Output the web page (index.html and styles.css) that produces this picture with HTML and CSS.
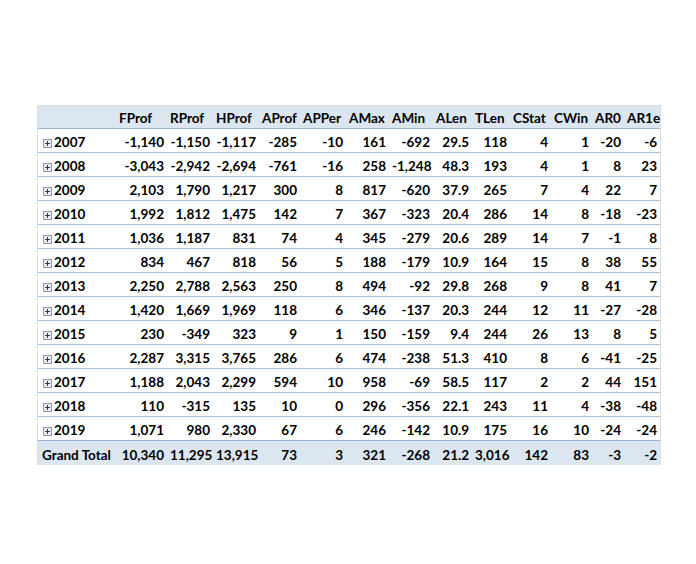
FILE: index.html
```html
<!DOCTYPE html>
<html>
<head>
<meta charset="utf-8">
<link rel="stylesheet" href="styles.css">
</head>
<body>
<div class="page">
<table class="pivot">
<colgroup>
<col class="c-label"><col class="c-fprof"><col class="c-rprof"><col class="c-hprof"><col class="c-aprof"><col class="c-apper"><col class="c-amax"><col class="c-amin"><col class="c-alen"><col class="c-tlen"><col class="c-cstat"><col class="c-cwin"><col class="c-ar0"><col class="c-ar1e">
</colgroup>
<thead>
<tr><th></th><th>FProf</th><th>RProf</th><th>HProf</th><th>AProf</th><th>APPer</th><th>AMax</th><th>AMin</th><th>ALen</th><th>TLen</th><th>CStat</th><th>CWin</th><th>AR0</th><th>AR1e</th></tr>
</thead>
<tbody id="rows"></tbody>
<tfoot>
<tr><td class="label">Grand Total</td><td>10,340</td><td>11,295</td><td>13,915</td><td>73</td><td>3</td><td>321</td><td>-268</td><td>21.2</td><td>3,016</td><td>142</td><td>83</td><td>-3</td><td>-2</td></tr>
</tfoot>
</table>
</div>
<script src="app.js"></script>
</body>
</html>
```
FILE: app.js
```js
var data = [
["2007","-1,140","-1,150","-1,117","-285","-10","161","-692","29.5","118","4","1","-20","-6"],
["2008","-3,043","-2,942","-2,694","-761","-16","258","-1,248","48.3","193","4","1","8","23"],
["2009","2,103","1,790","1,217","300","8","817","-620","37.9","265","7","4","22","7"],
["2010","1,992","1,812","1,475","142","7","367","-323","20.4","286","14","8","-18","-23"],
["2011","1,036","1,187","831","74","4","345","-279","20.6","289","14","7","-1","8"],
["2012","834","467","818","56","5","188","-179","10.9","164","15","8","38","55"],
["2013","2,250","2,788","2,563","250","8","494","-92","29.8","268","9","8","41","7"],
["2014","1,420","1,669","1,969","118","6","346","-137","20.3","244","12","11","-27","-28"],
["2015","230","-349","323","9","1","150","-159","9.4","244","26","13","8","5"],
["2016","2,287","3,315","3,765","286","6","474","-238","51.3","410","8","6","-41","-25"],
["2017","1,188","2,043","2,299","594","10","958","-69","58.5","117","2","2","44","151"],
["2018","110","-315","135","10","0","296","-356","22.1","243","11","4","-38","-48"],
["2019","1,071","980","2,330","67","6","246","-142","10.9","175","16","10","-24","-24"]
];
var icon = '<svg class="expand" width="9" height="9" viewBox="0 0 9 9"><rect x="0.5" y="0.5" width="8" height="8" fill="#eceef3" stroke="#8d98ad"/><path d="M2 4.5H7M4.5 2V7" stroke="#2f3b55" stroke-width="1"/></svg>';
var tb = document.getElementById("rows");
var html = "";
data.forEach(function (r) {
  html += "<tr>";
  r.forEach(function (v, i) {
    if (i === 0) html += '<td class="label">' + icon + '<span>' + v + '</span></td>';
    else html += "<td>" + v + "</td>";
  });
  html += "</tr>";
});
tb.innerHTML = html;
```
FILE: styles.css
```css
html, body { margin: 0; padding: 0; background: #ffffff; }
.page { padding: 105px 0 0 37px; }
.pivot {
  border-collapse: separate;
  border-spacing: 0;
  table-layout: fixed;
  width: 624px;
  border: 1px solid #dcdcdc;
  border-bottom: none;
  font-family: Lato, "Open Sans", sans-serif;
  font-weight: 700;
  font-size: 13.5px;
  color: #000;
}
.c-label { width: 78px; }
.c-fprof { width: 51px; }
.c-rprof { width: 46px; }
.c-hprof { width: 46px; }
.c-aprof { width: 41px; }
.c-apper { width: 46px; }
.c-amax { width: 43px; }
.c-amin { width: 44px; }
.c-alen { width: 39px; }
.c-tlen { width: 38px; }
.c-cstat { width: 41px; }
.c-cwin { width: 41px; }
.c-ar0 { width: 32px; }
.c-ar1e { width: 36px; }
.pivot th, .pivot td {
  padding: 0 3px 2px 3px;
  line-height: 16px;
  vertical-align: bottom;
  white-space: nowrap;
  overflow: visible;
}
.pivot th {
  height: 20px;
  background: #dce6f1;
  text-align: left;
  border-bottom: 1px solid #95b3d7;
}
.pivot td {
  height: 21px;
  text-align: right;
  border-bottom: 1px solid #a9c0e2;
}
.pivot td.label { text-align: left; padding-left: 4px; }
.pivot tbody td.label { padding-left: 5px; }
.expand { vertical-align: -1px; margin-right: 2px; }
.pivot tbody tr:last-child td { border-bottom: 1px solid #95b3d7; }
.pivot tfoot td {
  background: #dce6f1;
  border-bottom: none;
  height: 22px;
}
```
